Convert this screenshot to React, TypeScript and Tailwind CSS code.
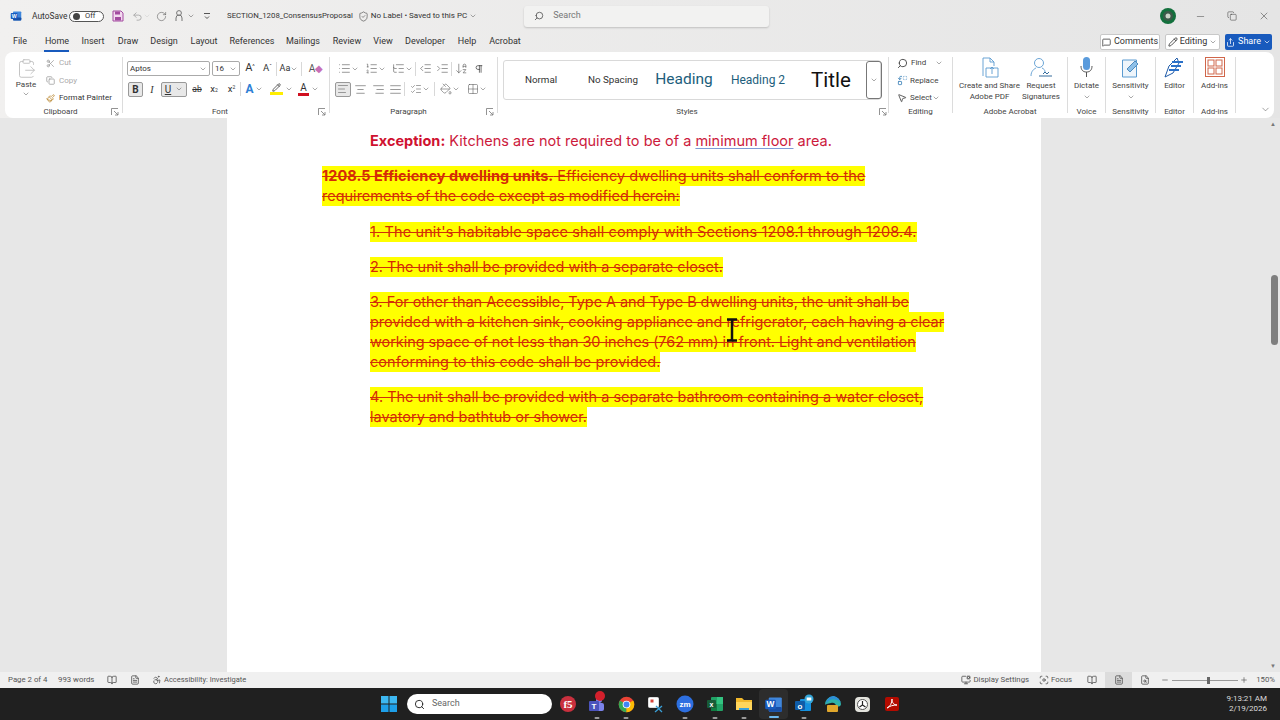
import React from "react";
import {
  AlignCenter, AlignJustify, AlignLeft, AlignRight, ArrowDownAZ, ChevronDown, Copy, IndentDecrease, IndentIncrease,
  List, ListOrdered, ListTree, Minus, MousePointer2, Paintbrush, Pencil, Pilcrow, Plus, RotateCw, Scissors, Search, Share, ShieldCheck, Undo2, X,
  MessageSquare, BookOpen, FileText, Focus, MonitorCog, Replace, PaintBucket, Grid2x2, ListChecks, FileSearch, Accessibility, ClipboardPaste,
} from "lucide-react";

const Cell = ({ w, children, className = "" }: { w: string; children?: React.ReactNode; className?: string }) => (
  <div className={`${w} flex shrink-0 items-center justify-center ${className}`}>{children}</div>
);
const Chev = ({ className = "" }: { className?: string }) => <ChevronDown size={8} strokeWidth={1.5} className={`shrink-0 text-[#555] ${className}`} />;
const Launcher = () => (
  <svg width="8" height="8" viewBox="0 0 8 8" className="shrink-0"><path d="M.5 7V.5H7M3 3l4 4M7 4v3H4" fill="none" stroke="#777" strokeWidth=".8" /></svg>
);
const Sep = () => <div className="h-[14px] w-px shrink-0 bg-[#d8d8d8]" />;
const GroupSep = () => <div className="mt-[5px] h-[56px] w-px shrink-0 bg-[#dcdcdc]" />;

const tabs: [string, string][] = [
  ["File", "w-[40px]"], ["Home", "w-[34px]"], ["Insert", "w-[38px]"], ["Draw", "w-[32px]"], ["Design", "w-[40px]"], ["Layout", "w-[40px]"],
  ["References", "w-[56px]"], ["Mailings", "w-[46px]"], ["Review", "w-[42px]"], ["View", "w-[30px]"], ["Developer", "w-[54px]"], ["Help", "w-[30px]"], ["Acrobat", "w-[46px]"],
];

const Big = ({ w, icon, l1, l2, chev }: { w: string; icon: React.ReactNode; l1: string; l2?: string; chev?: boolean }) => (
  <div className={`${w} flex shrink-0 flex-col items-center text-center text-[8px] leading-[10.5px] text-[#444]`}>
    <div className="flex h-[26px] w-full items-center justify-center">{icon}</div>
    <div className="mt-[1px] whitespace-nowrap">{l1}</div>
    {l2 && <div className="whitespace-nowrap">{l2}</div>}
    {chev && <Chev className="mt-[1px]" />}
  </div>
);

const Group = ({ w, label, launcher, pad = "", lpos = "right-[3px]", children }: { w: string; label: string; launcher?: boolean; pad?: string; lpos?: string; children: React.ReactNode }) => (
  <div className={`${w} relative h-[66px] shrink-0`}>
    {children}
    <div className={`absolute inset-x-0 bottom-0 flex h-[13px] items-center justify-center text-[8px] text-[#444] ${pad}`}>{label}</div>
    {launcher && <span className={`absolute bottom-[2px] ${lpos} flex`}><Launcher /></span>}
  </div>
);

const Hl = ({ children, cls = "" }: { children: React.ReactNode; cls?: string }) => (
  <div className={`h-5 w-fit whitespace-pre bg-[#ffff00] text-[#d62a06] line-through decoration-[#d03008] leading-5 ${cls}`}>{children}</div>
);

function Doc() {
  return (
    <div className="ml-[227px] h-full w-[814px] shrink-0 overflow-hidden bg-white pl-[95px] pt-[13px] text-[14.5px] [font-family:Inter,sans-serif]">
      <div className="ml-[48px] h-5 whitespace-pre leading-5 text-[#cc1a3c]">
        <b className="font-bold text-[#cf1130]">Exception:</b> Kitchens are not required to be of a <span className="underline decoration-[#7f9bd6] underline-offset-2">minimum floor</span> area.
      </div>
      <div className="mt-[15px]">
        <Hl cls="tracking-[.05px]"><b className="font-bold">1208.5 Efficiency dwelling units.</b> Efficiency dwelling units shall conform to the</Hl>
        <Hl>requirements of the code except as modified herein:</Hl>
      </div>
      <div className="ml-[48px]">
        <div className="mt-4"><Hl cls="tracking-[.12px]">1. The unit's habitable space shall comply with Sections 1208.1 through 1208.4.</Hl></div>
        <div className="mt-[15px]"><Hl>2. The unit shall be provided with a separate closet.</Hl></div>
        <div className="mt-[15px]">
          <Hl cls="tracking-[-.06px]">3. For other than Accessible, Type A and Type B dwelling units, the unit shall be</Hl>
          <Hl cls="tracking-[-.035px]">provided with a kitchen sink, cooking appliance and refrigerator, each having a clear</Hl>
          <Hl cls="tracking-[-.06px]">working space of not less than 30 inches (762 mm) in front. Light and ventilation</Hl>
          <Hl cls="tracking-[.05px]">conforming to this code shall be provided.</Hl>
        </div>
        <div className="mt-[15px]">
          <Hl>4. The unit shall be provided with a separate bathroom containing a water closet,</Hl>
          <Hl>lavatory and bathtub or shower.</Hl>
        </div>
      </div>
    </div>
  );
}

const WordIcon = ({ s = 12 }: { s?: number }) => (
  <svg width={s} height={s} viewBox="0 0 16 16"><rect x="4" y="2" width="11" height="12" rx="1" fill="#3f86dc" /><rect x="4" y="10" width="11" height="4" rx="1" fill="#174ea6" /><rect x="1" y="4" width="9" height="8" rx="1" fill="#185abd" /><text x="5.5" y="10.5" fontSize="7" fontWeight="700" fill="#fff" textAnchor="middle" fontFamily="Liberation Sans">W</text></svg>
);
const Dot = () => <span className="absolute bottom-[1px] left-1/2 h-[2px] w-[5px] -translate-x-1/2 rounded bg-[#9a9a9a]" />;

function TaskIcons() {
  return (
    <>
      <Cell w="w-[28px] ml-[2px]" className="relative h-8"><svg width="18" height="18" viewBox="0 0 18 18"><circle cx="9" cy="9" r="8" fill="#c9303e" /><text x="9" y="13" fontSize="11" fontWeight="700" fill="#fff" textAnchor="middle" fontFamily="Liberation Serif">f5</text></svg></Cell>
      <Cell w="w-[29px]" className="relative h-8"><svg width="20" height="20" viewBox="0 0 20 20"><circle cx="12" cy="6" r="3" fill="#7b83eb" /><rect x="9" y="9" width="8" height="8" rx="2" fill="#7b83eb" /><rect x="2" y="7" width="10" height="10" rx="1" fill="#4b53bc" /><text x="7" y="15" fontSize="8" fontWeight="700" fill="#fff" textAnchor="middle" fontFamily="Liberation Sans">T</text></svg><span className="absolute left-[13px] top-[3px] h-[10px] w-[10px] rounded-full bg-[#d4202c]" /><Dot /></Cell>
      <Cell w="w-[30px]" className="relative h-8"><svg width="17" height="17" viewBox="0 0 24 24"><circle cx="12" cy="12" r="11" fill="#ea4335" /><path d="M12 12L2.5 6.5A11 11 0 0 0 12 23z" fill="#34a853" /><path d="M12 12l9.5-5.5A11 11 0 0 1 12 23z" fill="#fbbc05" /><circle cx="12" cy="12" r="5.4" fill="#fff" /><circle cx="12" cy="12" r="4.2" fill="#4285f4" /></svg><Dot /></Cell>
      <Cell w="w-[28px]" className="h-8"><svg width="17" height="17" viewBox="0 0 17 17"><rect x="1.5" y="1.5" width="10" height="10" rx="1" fill="#fff" stroke="#ddd" /><rect x="3.5" y="3.5" width="3" height="3" fill="#d8443a" /><path d="M8 16l7-6M15 16L9 10" stroke="#3aa0d8" strokeWidth="1.3" /></svg></Cell>
      <Cell w="w-[32px]" className="relative h-8"><svg width="18" height="18" viewBox="0 0 18 18"><circle cx="9" cy="9" r="8.5" fill="#2d6fe0" /><text x="9" y="12" fontSize="8" fill="#fff" textAnchor="middle" fontWeight="700" fontFamily="Liberation Sans">zm</text></svg><Dot /></Cell>
      <Cell w="w-[28px]" className="relative h-8"><svg width="18" height="18" viewBox="0 0 18 18"><rect x="5" y="2" width="12" height="14" rx="1" fill="#21a366" /><rect x="11" y="2" width="6" height="7" fill="#33c481" /><rect x="5" y="9" width="6" height="7" fill="#107c41" /><rect x="1" y="5" width="9" height="8" rx="1" fill="#185c37" /><text x="5.5" y="11.5" fontSize="7" fontWeight="700" fill="#fff" textAnchor="middle" fontFamily="Liberation Sans">x</text></svg><Dot /></Cell>
      <Cell w="w-[30px]" className="relative h-8"><svg width="18" height="16" viewBox="0 0 18 16"><path d="M1 2h6l2 2h8v10H1z" fill="#f2b92c" /><rect x="1" y="6" width="16" height="8" fill="#ffd65c" /><rect x="4" y="12" width="10" height="2" fill="#3aa0d8" /></svg><Dot /></Cell>
      <Cell w="w-[29px]" className="relative h-[30px] rounded bg-[#2d2d2d]"><WordIcon s={19} /><span className="absolute bottom-[1px] h-[2px] w-[10px] rounded bg-[#6cb8f0]" /></Cell>
      <Cell w="w-[31px]" className="relative h-8"><svg width="20" height="20" viewBox="0 0 20 20"><rect x="6" y="5" width="11" height="12" rx="1" fill="#1490df" /><rect x="1" y="7" width="10" height="9" rx="1" fill="#0f5ca8" /><text x="6" y="14.5" fontSize="8" fontWeight="700" fill="#fff" textAnchor="middle" fontFamily="Liberation Sans">o</text><circle cx="15" cy="5" r="4.5" fill="#35a6d8" /><rect x="12.7" y="3.5" width="4.6" height="3" fill="#fff" /></svg><Dot /></Cell>
      <Cell w="w-[28px]" className="h-8"><svg width="18" height="18" viewBox="0 0 18 18"><path d="M1 10a8 8 0 0 1 16-1c0 3-4 3-5 2 0-2-2-4-5-3-3 1-6 1-6 2z" fill="#2fb4a8" /><path d="M2 9a8 8 0 0 1 7-8c3 0 6 2 8 7-2-3-8-5-11-3-2 1-3 3-4 4z" fill="#2d8fd5" /><rect x="3" y="10" width="11" height="7" rx="1" fill="#e0a72c" /></svg></Cell>
      <Cell w="w-[30px]" className="h-8"><svg width="17" height="17" viewBox="0 0 17 17"><rect x="1" y="1" width="15" height="15" rx="4" fill="#e3e3dd" /><circle cx="8.5" cy="8.5" r="5" fill="#fff" stroke="#555" /><path d="M8.5 5v4l-3 2M8.5 9l3 2" stroke="#222" fill="none" strokeWidth="1.2" /></svg></Cell>
      <Cell w="w-[29px]" className="h-8"><svg width="16" height="16" viewBox="0 0 16 16"><rect x="1" y="1" width="14" height="14" rx="2" fill="#b30b00" /><path d="M3 12c3-1 5-5 5-9 0 4 2 6 5 6-4 0-7 1-10 3z" stroke="#fff" fill="none" /></svg></Cell>
    </>
  );
}

export default function App() {
  const rib = "text-[8px] text-[#444]";
  const is = 13;
  return (
    <div className="flex h-[720px] w-[1280px] flex-col overflow-hidden bg-gradient-to-r from-[#f1f0ef] to-[#e5e5e5] text-[#333] [font-family:Roboto,sans-serif]">
      {/* title bar */}
      <div className="flex h-8 shrink-0 items-center text-[8.4px]">
        <div className="ml-[10px] w-[22px] shrink-0"><WordIcon /></div>
        <span className="w-[36px] shrink-0 whitespace-nowrap">AutoSave</span>
        <div className="ml-[1px] flex h-[11px] w-[35px] shrink-0 items-center rounded-full border border-[#555] bg-white pl-[3px] text-[7.5px]"><span className="h-[7px] w-[7px] rounded-full bg-[#444]" /><span className="ml-[5px]">Off</span></div>
        <svg width="12" height="12" viewBox="0 0 12 12" className="ml-[8px] shrink-0"><path d="M1 1h8l2 2v8H1z" fill="#f3d9ef" stroke="#a34aa0" /><rect x="3" y="1.5" width="5" height="3" fill="#a34aa0" /><rect x="3" y="7" width="6" height="3.5" fill="#a34aa0" /></svg>
        <Undo2 size={11} className="ml-[8px] shrink-0 text-[#aaa]" />
        <Chev className="text-[#ccc]" />
        <RotateCw size={11} strokeWidth={1.2} className="ml-[5px] shrink-0 text-[#555]" />
        <svg width="10" height="12" viewBox="0 0 10 12" fill="none" stroke="#777" className="ml-[7px] shrink-0"><circle cx="5" cy="3" r="2.4" /><path d="M2 11V8a3 3 0 0 1 6 0v3" /></svg>
        <Chev className="ml-[3px]" />
        <svg width="8" height="8" viewBox="0 0 8 8" fill="none" stroke="#555" className="ml-[8px] shrink-0"><path d="M1 1.500h6M2 4.500l2 2 2-2" /></svg>
        <span className="ml-[16px] whitespace-nowrap text-[7.8px] text-[#333]">SECTION_1208_ConsensusProposal</span>
        <ShieldCheck size={11} strokeWidth={1.2} className="ml-[5px] shrink-0" />
        <span className="ml-[2px] whitespace-nowrap text-[8px]">No Label • Saved to this PC</span>
        <Chev className="ml-[2px]" />
        <div className="ml-[47px] flex h-[21px] w-[245px] shrink-0 items-center rounded-[3px] bg-[#f2f2f1] pl-[10px] text-[9px] text-[#777] shadow-[0_1px_2px_rgba(0,0,0,.18)]">
          <Search size={10} className="mr-[9px] -scale-x-100 text-[#555]" />Search
        </div>
        <div className="flex-1" />
        <svg width="16" height="16" viewBox="0 0 16 16" className="shrink-0"><circle cx="8" cy="8" r="8" fill="#13703d" /><circle cx="8" cy="8" r="5" fill="#3e5a4a" /><circle cx="8" cy="8" r="2.5" fill="#cbd5c8" /></svg>
        <Cell w="w-[31px] ml-[9px]"><Minus size={11} strokeWidth={1} /></Cell>
        <Cell w="w-[32px]"><Copy size={10} strokeWidth={1.2} /></Cell>
        <Cell w="w-[32px]"><X size={12} strokeWidth={1} /></Cell>
      </div>
      {/* tabs */}
      <div className="flex h-5 shrink-0 items-center text-[9px]">
        <div className="flex">
          {tabs.map(([t, w]) => (
            <div key={t} className={`${w} relative flex h-5 shrink-0 items-center justify-center whitespace-nowrap`}>
              {t}
              {t === "Home" && <span className="absolute bottom-0 left-[4px] right-[5px] h-[2px] bg-[#185abd]" />}
            </div>
          ))}
        </div>
        <div className="flex-1" />
        <div className="flex h-[16px] w-[60px] items-center justify-center rounded-[2px] border border-[#c8c8c8] bg-white"><MessageSquare size={9} className="mr-[3px]" />Comments</div>
        <div className="ml-[5px] flex h-[16px] w-[55px] items-center justify-center rounded-[2px] border border-[#c8c8c8] bg-white"><Pencil size={10} className="mr-[2px]" />Editing<Chev className="ml-[2px]" /></div>
        <div className="ml-[5px] mr-[8px] flex h-[16px] w-[47px] items-center justify-center rounded-[2px] bg-[#185abd] text-white"><Share size={9} className="mr-[3px]" />Share<ChevronDown size={8} className="ml-[2px]" /></div>
      </div>
      {/* ribbon */}
      <div className="relative z-10 mx-[5px] flex h-[66px] w-[1269px] shrink-0 rounded-lg bg-white pl-[1px]">
        <Group w="w-[116px]" label="Clipboard" launcher pad="pr-[7px]">
          <div className="flex">
            <div className="flex w-[40px] flex-col items-center pt-[6px] text-[8px] leading-[10px] text-[#444]">
              <ClipboardPaste size={21} strokeWidth={1} className="text-[#bbb]" />
              <span className="mt-[1px]">Paste</span>
              <Chev />
            </div>
            <div className="flex flex-col pt-[2px] text-[8px]">
              <div className="flex h-[18px] items-center text-[#aaa]"><Scissors size={9} className="mr-[4px] text-[#999]" />Cut</div>
              <div className="flex h-[17px] items-center text-[#aaa]"><Copy size={9} className="mr-[4px] text-[#999]" />Copy</div>
              <div className="flex h-[18px] items-center whitespace-nowrap text-[#333]"><Paintbrush size={9} className="mr-[4px] text-[#b8862d]" />Format Painter</div>
            </div>
          </div>
        </Group>
        <GroupSep />
        <Group w="w-[206px]" label="Font" launcher pad="pr-[12px]">
          <div className="flex flex-col pl-[4px] pt-[9px]">
            <div className="flex h-[15px] items-center">
              <div className="flex h-[15px] w-[83px] shrink-0 items-center justify-between rounded-[2px] border border-[#aaa] px-[2px] text-[8px] text-[#333]">Aptos<Chev /></div>
              <div className="ml-[2px] flex h-[15px] w-[28px] shrink-0 items-center justify-between rounded-[2px] border border-[#aaa] px-[2px] text-[8px]">16<Chev /></div>
              <Cell w="w-[18px] ml-[1px]" className="text-[11px]">A<sup className="text-[6px]">^</sup></Cell>
              <Cell w="w-[17px]" className="text-[9.5px]">A<sup className="text-[6px]">ˇ</sup></Cell>
              <Sep />
              <Cell w="w-[24px]" className="text-[9px]">Aa<Chev /></Cell>
              <Sep />
              <Cell w="w-[25px]" className="pl-[3px] text-[10px] text-[#555]">A<span className="text-[#c86fb7]">◆</span></Cell>
            </div>
            <div className="ml-[1px] mt-[5px] flex h-[16px] items-center text-[10px]">
              <div className="flex h-[15px] w-[15px] shrink-0 items-center justify-center rounded-[2px] border border-[#999] bg-[#e8e8e8] font-bold">B</div>
              <Cell w="w-[18px]" className="italic"><span className="[font-family:'Liberation_Serif',serif]">I</span></Cell>
              <div className="flex h-[15px] w-[26px] shrink-0 items-center justify-center rounded-[2px] border border-[#999] bg-[#e8e8e8] underline">U<Chev className="ml-[4px]" /></div>
              <Cell w="w-[16px] ml-[2px]" className="line-through text-[8.5px]">ab</Cell>
              <Cell w="w-[18px]" className="text-[9.5px]">x<sub className="text-[5px]">2</sub></Cell>
              <Cell w="w-[17px]" className="text-[9.5px]">x<sup className="text-[5px]">2</sup></Cell>
              <Sep />
              <Cell w="w-[26px]" className="text-[12px] font-bold text-[#2f7fd5]">A<Chev className="ml-[1px]" /></Cell>
              <Cell w="w-[28px]"><span className="border-b-[3px] border-[#ffee00] px-[2px]"><Pencil size={9} /></span><Chev className="ml-[2px]" /></Cell>
              <Cell w="w-[27px]"><span className="border-b-[3px] border-[#d01020] px-[2px] text-[10px] leading-[11px]">A</span><Chev className="ml-[2px]" /></Cell>
            </div>
          </div>
        </Group>
        <GroupSep />
        <Group w="w-[167px]" label="Paragraph" launcher pad="pr-[10px]">
          <div className="flex flex-col pl-[4px] pt-[9px]">
            <div className="flex h-[15px] items-center text-[#555]">
              <Cell w="w-[28px]"><List size={is} strokeWidth={1.1} /><Chev /></Cell>
              <Cell w="w-[27px]"><ListOrdered size={is} strokeWidth={1.1} /><Chev /></Cell>
              <Cell w="w-[26px]"><ListTree size={is} strokeWidth={1.1} /><Chev /></Cell>
              <Sep />
              <Cell w="w-[18px]"><IndentDecrease size={is} strokeWidth={1.1} /></Cell>
              <Cell w="w-[17px]"><IndentIncrease size={is} strokeWidth={1.1} /></Cell>
              <Sep />
              <Cell w="w-[18px]"><ArrowDownAZ size={13} strokeWidth={1.1} /></Cell>
              <Cell w="w-[18px]"><Pilcrow size={10} strokeWidth={1.5} className="text-[#222]" /></Cell>
            </div>
            <div className="ml-[1px] mt-[5px] flex h-[16px] items-center text-[#555]">
              <div className="flex h-[15px] w-[16px] shrink-0 items-center justify-center rounded-[2px] border border-[#999] bg-[#e8e8e8]"><AlignLeft size={12} strokeWidth={1.1} /></div>
              <Cell w="w-[18px]"><AlignCenter size={is} strokeWidth={1.1} /></Cell>
              <Cell w="w-[18px]"><AlignRight size={is} strokeWidth={1.1} /></Cell>
              <Cell w="w-[17px]"><AlignJustify size={is} strokeWidth={1.1} /></Cell>
              <Sep />
              <Cell w="w-[29px]"><ListChecks size={12} strokeWidth={1.1} /><Chev /></Cell>
              <Sep />
              <Cell w="w-[26px] ml-[2px]"><PaintBucket size={12} strokeWidth={1.1} /><Chev /></Cell>
              <Cell w="w-[27px]"><Grid2x2 size={12} strokeWidth={1.1} /><Chev /></Cell>
            </div>
          </div>
        </Group>
        <GroupSep />
        <Group w="w-[390px]" label="Styles" launcher pad="pr-[12px]" lpos="right-[1px]">
          <div className="ml-[5px] mt-[8px] flex h-[40px] w-[378px] items-stretch rounded-[3px] border border-[#d9d9d9]">
            <Cell w="w-[74px]" className="text-[9.8px] text-[#333]">Normal</Cell>
            <Cell w="w-[70px]" className="text-[9.8px] text-[#333]">No Spacing</Cell>
            <Cell w="w-[72px]" className="text-[15.5px] text-[#215e7c]">Heading</Cell>
            <Cell w="w-[76px]" className="text-[12px] text-[#215e7c]">Heading 2</Cell>
            <Cell w="w-[70px]" className="text-[20.5px] text-[#111]">Title</Cell>
            <div className="flex w-[16px] shrink-0 items-center justify-center rounded-[3px] border border-[#777]"><Chev /></div>
          </div>
        </Group>
        <GroupSep />
        <Group w="w-[63px]" label="Editing">
          <div className={`flex flex-col pl-[8px] pt-[2px] ${rib}`}>
            <div className="flex h-[18px] items-center"><Search size={11} className="mr-[3px] -scale-x-100" />Find<Chev className="ml-[9px]" /></div>
            <div className="flex h-[17px] items-center"><Replace size={11} className="mr-[2px] text-[#4a8bbd]" />Replace</div>
            <div className="flex h-[18px] items-center"><MousePointer2 size={10} className="mr-[3px]" />Select<Chev /></div>
          </div>
        </Group>
        <GroupSep />
        <Group w="w-[114px]" label="Adobe Acrobat">
          <div className="flex pt-[2px]">
            <Big w="w-[73px]" l1="Create and Share" l2="Adobe PDF" icon={<svg width="18" height="21" viewBox="0 0 18 21" fill="none" stroke="#5b9bd0" strokeWidth=".9"><path d="M2 19V1h7l4 4v4M9 1v4h4" /><path d="M5 11h12v9H5zM11 17v-7M9 12l2-2 2 2" /></svg>} />
            <Big w="w-[30px]" l1="Request" l2="Signatures" icon={<svg width="24" height="21" viewBox="0 0 24 21" fill="none" stroke="#5b9bd0" strokeWidth=".9"><circle cx="10" cy="6" r="4.5" /><path d="M2 19c0-5 3-7 5-8M13 11c2 1 3 2 3 4" /><path d="M10 19h13M14 17l2-2 2 2 2-2" stroke="#1e5a90" /></svg>} />
          </div>
        </Group>
        <GroupSep />
        <Group w="w-[37px]" label="Voice">
          <div className="pt-[2px]"><Big w="w-[37px]" l1="Dictate" chev icon={<svg width="13" height="22" viewBox="0 0 13 22"><rect x="3" y="1" width="7" height="13" rx="3.5" fill="#5a9bdc" /><path d="M1 10c0 4 2 6 5.500 6s5.500-2 5.500-6M6.500 16v5" stroke="#555" fill="none" /></svg>} /></div>
        </Group>
        <GroupSep />
        <Group w="w-[49px]" label="Sensitivity">
          <div className="pt-[2px]"><Big w="w-[49px]" l1="Sensitivity" chev icon={<svg width="20" height="21" viewBox="0 0 20 21"><path d="M1.500 3h14v17h-14z" fill="#eef5fb" stroke="#5b9bd0" /><path d="M6 12l8-8 3 3-8 8z" fill="#8ec0e8" stroke="#4f8cbf" /></svg>} /></div>
        </Group>
        <GroupSep />
        <Group w="w-[37px]" label="Editor">
          <div className="pt-[2px]"><Big w="w-[37px]" l1="Editor" icon={<svg width="21" height="21" viewBox="0 0 21 21" fill="none"><path d="M1 20L5 9 13 1l2 5-6 10z" fill="#fff" stroke="#1e5aa8" /><path d="M8 5h11M7 9h10M5 13h10" stroke="#2a70c8" strokeWidth="2" /></svg>} /></div>
        </Group>
        <GroupSep />
        <Group w="w-[41px]" label="Add-ins">
          <div className="pt-[2px]"><Big w="w-[41px]" l1="Add-ins" icon={<svg width="20" height="20" viewBox="0 0 20 20" fill="#fff" stroke="#d0664a"><rect x=".500" y=".500" width="19" height="19" /><rect x="3" y="3" width="6" height="6" /><rect x="11" y="3" width="6" height="6" /><rect x="3" y="11" width="6" height="6" /><rect x="11" y="11" width="6" height="6" /></svg>} /></div>
        </Group>
        <GroupSep />
        <div className="flex h-[66px] flex-1 items-end justify-center pb-[3px] pl-[20px]"><ChevronDown size={11} strokeWidth={1.2} className="text-[#555]" /></div>
      </div>
      {/* document */}
      <div className="relative flex min-h-0 flex-1 bg-[#e7e7e7]">
        <Doc />
        <div className="absolute right-0 top-0 flex h-full w-[14px] flex-col items-center justify-between py-[2px] text-[#777]">
          <span className="text-[6px] leading-[8px]">▲</span>
          <span className="text-[6px] leading-[8px]">▼</span>
        </div>
        <div className="absolute right-[2px] top-[157px] h-[70px] w-[7px] rounded-full bg-[#7f7f7f]" />
        <svg width="12" height="24" viewBox="0 0 12 24" className="absolute left-[726px] top-[200px]"><path d="M1 1.500h10M1 22.500h10M6 1.500v21" stroke="#111" strokeWidth="2.500" fill="none" /></svg>
      </div>
      {/* status */}
      <div className="flex h-4 shrink-0 items-center bg-[#f0f0f0] text-[7.8px] text-[#555]">
        <span className="ml-[8px] w-[39px] whitespace-nowrap">Page 2 of 4</span>
        <span className="ml-[11px] w-[38px] whitespace-nowrap">993 words</span>
        <BookOpen size={10} className="ml-[11px]" />
        <FileText size={10} className="ml-[13px]" />
        <Accessibility size={10} className="ml-[12px] mr-[2px]" />
        <span className="whitespace-nowrap text-[7.5px]">Accessibility: Investigate</span>
        <div className="flex-1" />
        <MonitorCog size={10} className="mr-[2px]" />
        <span className="whitespace-nowrap">Display Settings</span>
        <Focus size={10} className="ml-[10px] mr-[2px]" />
        <span>Focus</span>
        <Cell w="w-[26px] ml-[7px]" className="h-4"><BookOpen size={10} /></Cell>
        <Cell w="w-[27px]" className="h-4 bg-[#dcdcdc]"><FileText size={10} /></Cell>
        <Cell w="w-[26px]" className="h-4"><FileSearch size={10} /></Cell>
        <Minus size={8} className="ml-[3px]" />
        <div className="relative ml-[3px] h-px w-[66px] bg-[#999]"><span className="absolute left-[35px] top-[-3px] h-[7px] w-[3px] bg-[#666]" /></div>
        <Plus size={8} className="ml-[2px]" />
        <span className="ml-[8px] mr-[5px]">150%</span>
      </div>
      {/* taskbar */}
      <div className="flex h-8 shrink-0 items-center bg-[#202020]">
        <svg width="16" height="16" viewBox="0 0 16 16" className="ml-[381px] shrink-0"><rect width="7.500" height="7.500" fill="#3db8f2" /><rect x="8.500" width="7.500" height="7.500" fill="#3db8f2" /><rect y="8.500" width="7.500" height="7.500" fill="#1e9fe8" /><rect x="8.500" y="8.500" width="7.500" height="7.500" fill="#1e9fe8" /></svg>
        <div className="ml-[10px] flex h-5 w-[145px] shrink-0 items-center rounded-full bg-white pl-[7px] text-[9px] text-[#666]"><Search size={11} className="mr-[7px] text-[#222]" strokeWidth={2} />Search</div>
        <TaskIcons />
        <div className="flex-1" />
        <div className="mr-[13px] text-right text-[8px] leading-[10px] text-[#ddd]">
          <div>9:13:21 AM</div>
          <div>2/19/2026</div>
        </div>
      </div>
    </div>
  );
}
